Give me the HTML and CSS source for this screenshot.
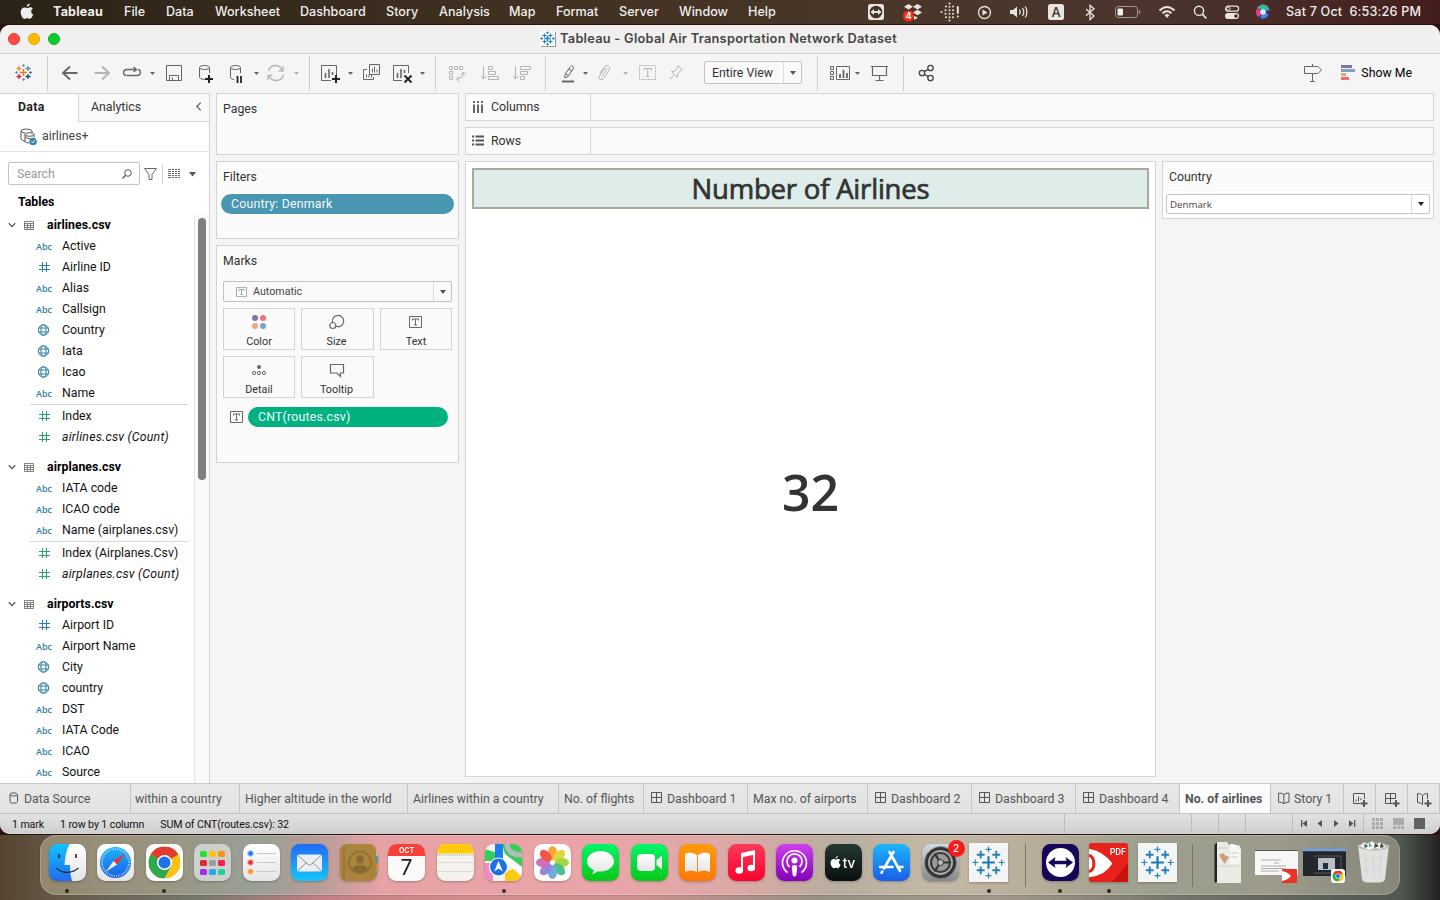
FILE: index.html
```html
<!DOCTYPE html>
<html lang="en">
<head>
<meta charset="utf-8">
<title>Tableau - Global Air Transportation Network Dataset</title>
<link rel="stylesheet" href="styles.css">
</head>
<body>
<svg class="defs" width="0" height="0">
  <defs>
    <symbol id="hash" viewBox="0 0 16 12"><path d="M6.5 1v10M10.5 1v10M3 4.500h11M3 8.500h11" stroke="currentColor" stroke-width="1.100" fill="none"/></symbol>
    <symbol id="globe" viewBox="0 0 16 12"><g stroke="currentColor" fill="none"><circle cx="7.500" cy="6" r="5.200"/><ellipse cx="7.500" cy="6" rx="2.600" ry="5.200"/><path d="M2.600 4h9.800M2.600 8h9.800"/></g></symbol>
    <symbol id="table" viewBox="0 0 10 10"><path d="M.5 1.500h9v8h-9zM.5 3.500h9M.5 5.500h9M.5 7.500h9M3.500 3.500v6M6.500 3.500v6" stroke="#777" fill="none" stroke-width=".9"/></symbol>
    <symbol id="chev" viewBox="0 0 8 6"><path d="M.8 1.200 4 4.600 7.200 1.200" stroke="#555" stroke-width="1.300" fill="none"/></symbol>
    <symbol id="grid" viewBox="0 0 12 12"><path d="M.5.5h10v10h-10zM5.500.5v10M.5 5.500h10" stroke="#555" fill="none"/></symbol>
    <symbol id="book" viewBox="0 0 12 13"><path d="M.6 1.200Q4 .6 5.800 2.600 7.600 .6 11 1.200V10.200Q7.600 9.800 5.800 11.800 4 9.800 .6 10.200ZM5.800 2.600V11.500" stroke="#555" fill="none"/></symbol>
    <symbol id="tbox" viewBox="0 0 13 12"><path d="M.5.5h12v11H.5z" fill="none" stroke="currentColor"/><path d="M3.500 4.500V3h6v1.500M6.500 3v6M5 9h3" fill="none" stroke="currentColor"/></symbol>
    <symbol id="tab-mark" viewBox="0 0 40 40">
      <path d="M20 13.500v13M13.500 20h13" stroke="#1f77b4" stroke-width="2.200"/>
      <path d="M12 8v8M8 12h8M28 8v8M24 12h8M12 24v8M8 28h8M28 24v8M24 28h8" stroke="#2480b4" stroke-width="1.900"/>
      <path d="M20 3.500v6M17 6.500h6M20 30.500v6M17 33.500h6M6.500 17v6M3.500 20h6M33.500 17v6M30.500 20h6" stroke="#2c86b4" stroke-width="1.200"/>
    </symbol>
    <symbol id="chrome" viewBox="0 0 32 32">
      <circle cx="16" cy="16" r="16" fill="#fbc116"/>
      <path d="M16 16 2.140 8A16 16 0 0 1 29.860 8Z" fill="#e33b2e"/><path d="M2.140 8A16 16 0 0 0 16 32L22.900 20 16 16Z" fill="#2da94f"/>
      <path d="M16 8.500H29.900L22.500 20 16 32A16 16 0 0 0 29.900 8.500Z" fill="#fbc116"/>
      <circle cx="16" cy="16" r="7.600" fill="#fff"/><circle cx="16" cy="16" r="6" fill="#1a73e8"/>
    </symbol>
    <linearGradient id="blue" x2="0" y2="1"><stop stop-color="#1e6bf3"/><stop offset="1" stop-color="#19c5fb"/></linearGradient>
    <linearGradient id="finder" x2="0" y2="1"><stop stop-color="#12c3fb"/><stop offset="1" stop-color="#1e6bf3"/></linearGradient>
    <linearGradient id="sky" x2="0" y2="1"><stop stop-color="#1bb6fa"/><stop offset="1" stop-color="#1a5ee8"/></linearGradient>
    <linearGradient id="green" x2="0" y2="1"><stop stop-color="#05f56b"/><stop offset="1" stop-color="#07c816"/></linearGradient>
    <linearGradient id="orange" x2="0" y2="1"><stop stop-color="#ff9b09"/><stop offset="1" stop-color="#fd7902"/></linearGradient>
    <linearGradient id="red" x2="0" y2="1"><stop stop-color="#fb3a5b"/><stop offset="1" stop-color="#f9022c"/></linearGradient>
    <linearGradient id="purple" x2="0" y2="1"><stop stop-color="#cf3ff0"/><stop offset="1" stop-color="#8300b8"/></linearGradient>
    <linearGradient id="white" x2="0" y2="1"><stop stop-color="#fff"/><stop offset="1" stop-color="#e4e4e6"/></linearGradient>
    <linearGradient id="steel" x2="0" y2="1"><stop stop-color="#cfdbe0"/><stop offset="1" stop-color="#86888a"/></linearGradient>
    <linearGradient id="dark" x2="0" y2="1"><stop stop-color="#24372f"/><stop offset="1" stop-color="#0b1013"/></linearGradient>
    <clipPath id="tile"><rect width="37" height="37" rx="8.500"/></clipPath>
  </defs>
</svg>

<header class="menubar">
  <svg class="apple" width="14" height="17" viewBox="0 0 14 17"><path d="M9.700.5C9.800 2 8.500 3.700 6.900 3.700 6.800 2.200 8.200.7 9.700.5ZM12.900 5.600C11.700 6.300 11.200 7.300 11.200 8.500 11.200 10 12 11.100 13.200 11.600 12.700 13.200 11.300 15.900 9.800 15.900 8.800 15.900 8.500 15.300 7.200 15.300 6 15.300 5.600 15.900 4.600 15.900 2.800 15.900.700 12.300.700 9.200.700 6.200 2.500 4.400 4.500 4.400 5.700 4.400 6.400 5.100 7.300 5.100 8.200 5.100 9 4.300 10.400 4.300 11.500 4.300 12.400 4.900 12.900 5.600Z" fill="#eee"/></svg>
  <nav class="menus">
    <b>Tableau</b><span>File</span><span>Data</span><span>Worksheet</span><span>Dashboard</span><span>Story</span><span>Analysis</span><span>Map</span><span>Format</span><span>Server</span><span>Window</span><span>Help</span>
  </nav>
  <svg class="status-icons" width="420" height="25" viewBox="860 0 420 25" fill="none" stroke="#e8e4e0">
    <rect x="868" y="4" width="16" height="16" rx="2.500" fill="#e8e4e0" stroke="none"/><circle cx="876" cy="12" r="6.300" fill="#43352b" stroke="none"/><path d="m870.500 12 3.500-3v2h4V9l3.500 3-3.500 3v-2h-4v2z" fill="#e8e4e0" stroke="none"/>
    <path d="m908.500 4 4.500 2.800-4.500 2.800-4.500-2.800zM917.500 4l4.500 2.800-4.500 2.800-4.500-2.800zM917.500 9.700l4.500 2.800-4.500 2.800-4.500-2.800zM914 15.800l4 2-4 2.200z" fill="#e8e4e0" stroke="none"/><circle cx="908.500" cy="16" r="5.500" fill="#fb2a17" stroke="none"/>
    <path stroke-width="2" stroke-linecap="round" d="M949.500 3.500h.01M946 6.500h.01M949.500 6.800h.01M953 6.500h.01M941.500 12h.01M945.500 10.200h.01M949.500 10.200h.01M953 10.200h.01M945.500 13.700h.01M949.500 13.700h.01M953 13.700h.01M946 17.200h.01M949.500 17.200h.01M953 17.200h.01M949.500 20.500h.01M957.800 7v6M957.800 16.500h.01"/>
    <circle cx="984.500" cy="12.500" r="6" stroke-width="1.300"/><path d="m982.500 9.500 5 3-5 3z" fill="#e8e4e0" stroke="none"/>
    <path d="M1010 10h3l4-3.500v11l-4-3.500h-3z" fill="#e8e4e0" stroke="none"/><path d="M1019.500 9.500q1.500 2.500 0 5M1022.500 8q2.500 4 0 8M1025.300 6.500q3.200 5.500 0 11" stroke-width="1.300"/>
    <rect x="1048" y="4" width="16" height="16" rx="2.500" fill="#e8e4e0" stroke="none"/>
    <path d="m1086 9 8 7-4 3.500V5.500l4 3.300-8 7" stroke-width="1.300"/>
    <rect x="1115.500" y="6.500" width="22" height="11" rx="3" stroke="#a39891"/><rect x="1117.500" y="8.500" width="5.500" height="7" rx="1" fill="#f2eeee" stroke="none"/><path d="M1139.500 10.500v3" stroke="#a39891" stroke-width="1.500"/>
    <path d="M1159.500 10.500q7.500-7 15 0M1162.500 13.200q4.500-4 9 0" stroke-width="2"/><path d="m1167 18-2.500-3q2.500-1.800 5 0z" fill="#e8e4e0" stroke="none"/>
    <circle cx="1199" cy="10.800" r="4.600" stroke-width="1.400"/><path d="m1202.300 14.200 4 4.200" stroke-width="1.700"/>
    <rect x="1225.600" y="6.200" width="13" height="5" rx="2.500" stroke-width="1.200"/><circle cx="1228.300" cy="8.700" r="1.700"/><rect x="1225" y="13" width="14" height="6" rx="3" fill="#e8e4e0" stroke="none"/><circle cx="1236" cy="16" r="1.800" fill="#40302c" stroke="none"/>
    <circle cx="1263" cy="12" r="7" fill="#3b2c6c" stroke="none"/><path d="M1257 8q2-3.500 7-3.500 5 1 5.500 6l-5.500 0z" fill="#3bb6a0" stroke="none"/><path d="M1257 8q-2.500 6 1 9 4-2 5-5z" fill="#e83a87" stroke="none"/><path d="M1260 18q5 2 8-2 1-3-5-4z" fill="#3a87e8" stroke="none"/><circle cx="1263" cy="12" r="2.800" fill="#d9f2fb" stroke="none"/>
    <text x="908.500" y="19" class="tiny">4</text><text x="1056" y="17" class="inp">A</text>
  </svg>
  <span class="clock">Sat 7 Oct&nbsp; 6:53:26 PM</span>
</header>

<main class="window">
  <div class="titlebar">
    <div class="lights"><i class="close"></i><i class="min"></i><i class="max"></i></div>
    <div class="title"><span class="title-icon"><svg width="15" height="15" viewBox="0 0 15 15" fill="none" stroke="#2382b5" stroke-width="1.200"><path d="M7.500 4.500v6M4.500 7.500h6" stroke-width="1.500"/><path d="M4.500 2.500v4M2.500 4.500h4M10.500 2.500v4M8.500 4.500h4M4.500 8.500v4M2.500 10.500h4M10.500 8.500v4M8.500 10.500h4M7.500.5v2.500M6.300 1.500h2.400M7.500 12v2.500M6.300 13.500h2.400M.5 7.500H3M1.500 6.300v2.400M12 7.500h2.500M13.500 6.300v2.400"/></svg></span><b>Tableau - Global Air Transportation Network Dataset</b></div>
  </div>

  <div class="toolbar">
    <svg class="tg" width="47" height="35" viewBox="0 56 47 35" stroke-width="1.300">
      <path d="M23.500 69v7M20 72.500h7" stroke="#e8762d" stroke-width="1.500"/><path d="M19 66v5M16.500 68.500h5" stroke="#eb912c"/><path d="M28 66v5M25.500 68.500h5" stroke="#59879b"/><path d="M19 74v5M16.500 76.500h5" stroke="#c72037"/><path d="M28 74v5M25.500 76.500h5" stroke="#1f457e"/><path d="M23.500 64v3M22 65.500h3M23.500 78v3M22 79.500h3M16.500 71v3M15 72.500h3" stroke="#7099a6" stroke-width="1"/><path d="M30.500 71v3M29 72.500h3" stroke="#5b6591" stroke-width="1"/>
    </svg>
    <svg class="tg" width="261" height="35" viewBox="48 56 261 35" fill="none" stroke="#666">
      <path d="M77.500 73H63.500m6.500-6.500L63 73l7 6.500" stroke-width="1.900"/>
      <path d="M94.500 73h14m-6.500-6.500 7 6.500-7 6.500" stroke="#b4b4b4" stroke-width="1.900"/>
      <path d="M126 75.500q-2.500-.5-2.500-3t3-3H136m-2.500-2.500 3 2.500-3 2.500M138 69.500q2.500.5 2.500 3t-3 3h-11" stroke-width="1.300"/>
      <path d="M150 72h5l-2.500 3z" fill="#666" stroke="none"/>
      <path d="M166.500 65.500h15v15h-15zM169.500 80.500v-5h9v5M172.500 80v-2.500"/>
      <ellipse cx="204.500" cy="67.500" rx="5" ry="2"/><path d="M199.500 67.500v10q1 2 5 2M209.500 67.500V73"/><path d="M209 75v8M205 79h8" stroke="#222" stroke-width="2"/>
      <ellipse cx="235.500" cy="67.500" rx="5" ry="2"/><path d="M230.500 67.500v10q1 2 3.500 2M240.500 67.500V73"/><path d="M237.500 76v7M241 76v7" stroke="#222" stroke-width="1.800"/>
      <path d="M254 72h5l-2.500 3z" fill="#666" stroke="none"/>
      <path d="M268.500 71q1.500-5.500 7-5.500 4.500 0 6.500 4.500M283.500 75q-1.500 5.500-7.500 5.500-5 0-7-4.500M283 66v5h-4.500M268 80v-4.500h4.500" stroke="#b4b4b4" stroke-width="1.300"/>
      <path d="M294 72h5l-2.500 3z" fill="#b4b4b4" stroke="none"/>
    </svg>
    <svg class="tg" width="125" height="35" viewBox="310 56 125 35" fill="none" stroke="#666">
      <path d="M321.500 65.500h15V75M331 80.500h-9.500v-15"/><path d="M325.500 78v-5M329 78v-9M332.500 75v-3" stroke-width="1.600"/><path d="M336 75v8M332 79h8" stroke="#222" stroke-width="2"/>
      <path d="M348 72h5l-2.500 3z" fill="#666" stroke="none"/>
      <path d="M369.500 64.500h10v10h-10zM367 69.500h-3.500v10h10V77M372.500 72.500v-4M374.500 72.500v-6M377 72.500v-3M366.500 77.500v-3M369 77.500v-3M371.500 77.500v-3"/>
      <path d="M393.500 65.500h15V73M402 80.500h-8.500v-15"/><path d="M397.500 78v-5M401 78v-9M404.500 73v-3" stroke-width="1.600"/><path d="m404.500 75.500 7 7m0-7-7 7" stroke="#222" stroke-width="1.900"/>
      <path d="M420 72h5l-2.500 3z" fill="#666" stroke="none"/>
    </svg>
    <svg class="tg" width="109" height="35" viewBox="436 56 109 35" fill="none" stroke="#b4b4b4">
      <path d="M449.500 66.500h3v3h-3zM454.500 66.500h3v3h-3zM459.500 66.500h3v3h-3zM449.500 71.500h3v3h-3zM449.500 76.500h3v3h-3zM463.500 72q0 6.500-6.500 7m2.500-2.500-3 2.500 3 2.500m1.500-6.500 2.500-3 2.500 3"/>
      <path d="M483.500 66v13m-2.500-3 2.500 3 2.500-3M488.500 66.500h4v3h-4zM488.500 71.500h7v3h-7zM488.500 76.500h10v3h-10z"/>
      <path d="M515.500 66v13m-2.500-3 2.500 3 2.500-3M520.500 66.500h10v3h-10zM520.500 71.500h7v3h-7zM520.500 76.500h4v3h-4z"/>
    </svg>
    <svg class="tg last" width="150" height="35" viewBox="546 56 150 35" fill="none" stroke="#666">
      <path d="m564.500 77.500 1-4 5-7q1-1.500 2-.5l.5.500q1 .5.500 1.500l-4.500 7.500-3 2zM568.500 69l3.500 2M565.500 73.500l3 2"/><path d="M562 81.500h12" stroke-width="2"/>
      <path d="M583 72h5l-2.500 3z" fill="#666" stroke="none"/>
      <path d="m600 73 4-5.500q2-3 4.500-1.500t.5 4.500l-5.500 8q-1.500 2-3.500 1t-.5-3.500l4.500-7q1-1.300 2-.4t0 1.900l-4 6" stroke="#b4b4b4"/>
      <path d="M623 72h5l-2.500 3z" fill="#b4b4b4" stroke="none"/>
      <path d="M639.500 65.500h16v14h-16z" stroke="#b4b4b4" stroke-dasharray="2 1"/><path d="M644 70.500v-2h7.500v2M647.700 68.500v8M646 76.500h3.500" stroke="#b4b4b4"/>
      <path d="m678 65.500 4.500 4.500-2 .5-3 3.500v3.500l-6-6 3.500-.5 2.500-3zM674 74.500l-3.500 4.500" stroke="#b4b4b4"/>
    </svg>
    <div class="fit"><span>Entire View</span><i class="caret"></i></div>
    <svg class="tg" width="85" height="35" viewBox="818 56 85 35" fill="none" stroke="#666">
      <path d="M830.500 66.500h3v3h-3zM830.500 71.500h3v3h-3zM830.500 76.500h3v3h-3zM836.500 66.500h13v13h-13z"/><path d="M840 78v-4M843.500 78v-8M847 78v-5" stroke-width="1.800"/>
      <path d="M855 72h5l-2.500 3z" fill="#666" stroke="none"/>
      <path d="M871 66.500h17M872.500 66.500v9h14v-9M879.500 76v4M875.500 80.500h8" stroke-width="1.200"/>
    </svg>
    <svg class="tg last" width="50" height="35" viewBox="904 56 50 35" fill="none" stroke="#444" stroke-width="1.300"><circle cx="922" cy="73" r="2.700"/><circle cx="930.500" cy="68" r="2.700"/><circle cx="930.500" cy="78" r="2.700"/><path d="m924.300 71.600 4-2.200M924.300 74.400l4 2.200"/></svg>
    <div class="showme">
      <svg width="54" height="20" viewBox="1303 63 54 20" fill="none"><path d="M1304.500 66.500h13.500l3.500 3.500-3.500 3.500h-13.500zM1312.500 64v2.500M1312.500 73.500v8M1310 81.500h5" stroke="#666"/><path d="M1341 65h11v3h-11z" fill="#8074a0"/><path d="M1341 69h14v3h-14z" fill="#7f9fcb"/><path d="M1341 73h5v3h-5z" fill="#f2a279"/><path d="M1341 77h8v3h-8z" fill="#f4687c"/></svg>
      <span>Show Me</span>
    </div>
  </div>

  <div class="work">
    <aside class="side">
      <div class="side-tabs"><b>Data</b><span>Analytics</span><svg width="7" height="10" viewBox="0 0 7 10"><path d="M6 .8 1.500 5 6 9.200" stroke="#555" stroke-width="1.200" fill="none"/></svg></div>
      <div class="source">
        <svg width="18" height="18" viewBox="0 0 18 18" fill="none" stroke="#555"><path d="M12 5V3Q11 1 6.500 1T1 3v8q1 2 4 2M1 3q1 2 4 2"/><ellipse cx="9.500" cy="6.500" rx="4.500" ry="1.800"/><path d="M5 6.500v7q1 1.500 4 1.500M14 6.500v3M5 9q2 2 5 1.500"/><circle cx="13" cy="13.500" r="3.800" fill="#3a86a8" stroke="none"/><path d="m11.300 13.500 1.300 1.300 2.200-2.500" stroke="#fff"/></svg>
        <span>airlines+</span>
      </div>
      <div class="search-row">
        <div class="search"><span>Search</span><svg width="10" height="10" viewBox="0 0 10 10" fill="none" stroke="#555"><circle cx="6" cy="4" r="3.300"/><path d="M3.500 6.500.5 9.500" stroke-width="1.300"/></svg></div>
        <svg width="54" height="20" viewBox="143 163 54 20" fill="none" stroke="#666"><path d="M144.500 167.500h12l-4.500 6v5h-3v-5z"/><path d="M162.500 164v18" stroke="#ccc"/><path d="M168 168.500h12M168 170.500h12M168 172.500h12M168 174.500h12M168 176.500h12" stroke-dasharray="3 1 2 1 2 1 2"/><path d="M189 171h7l-3.500 4.500z" fill="#555" stroke="none"/></svg>
      </div>
      <div class="tables-h">Tables</div>
      <div class="tree-wrap">
        <ul class="tree">
          <li class="t"><svg width="8" height="6"><use href="#chev"/></svg><svg width="10" height="10"><use href="#table"/></svg><b>airlines.csv</b></li>
          <li><em>Abc</em>Active</li>
          <li><svg width="16" height="12"><use href="#hash"/></svg>Airline ID</li>
          <li><em>Abc</em>Alias</li>
          <li><em>Abc</em>Callsign</li>
          <li><svg width="16" height="12"><use href="#globe"/></svg>Country</li>
          <li><svg width="16" height="12"><use href="#globe"/></svg>Iata</li>
          <li><svg width="16" height="12"><use href="#globe"/></svg>Icao</li>
          <li><em>Abc</em>Name</li>
          <li class="rule"></li>
          <li class="m"><svg width="16" height="12"><use href="#hash"/></svg>Index</li>
          <li class="m cnt"><svg width="16" height="12"><use href="#hash"/></svg><i>airlines.csv (Count)</i></li>
          <li class="t"><svg width="8" height="6"><use href="#chev"/></svg><svg width="10" height="10"><use href="#table"/></svg><b>airplanes.csv</b></li>
          <li><em>Abc</em>IATA code</li>
          <li><em>Abc</em>ICAO code</li>
          <li><em>Abc</em>Name (airplanes.csv)</li>
          <li class="rule"></li>
          <li class="m"><svg width="16" height="12"><use href="#hash"/></svg>Index (Airplanes.Csv)</li>
          <li class="m cnt"><svg width="16" height="12"><use href="#hash"/></svg><i>airplanes.csv (Count)</i></li>
          <li class="t"><svg width="8" height="6"><use href="#chev"/></svg><svg width="10" height="10"><use href="#table"/></svg><b>airports.csv</b></li>
          <li><svg width="16" height="12"><use href="#hash"/></svg>Airport ID</li>
          <li><em>Abc</em>Airport Name</li>
          <li><svg width="16" height="12"><use href="#globe"/></svg>City</li>
          <li><svg width="16" height="12"><use href="#globe"/></svg>country</li>
          <li><em>Abc</em>DST</li>
          <li><em>Abc</em>IATA Code</li>
          <li><em>Abc</em>ICAO</li>
          <li><em>Abc</em>Source</li>
        </ul>
        <div class="track"><i class="thumb"></i></div>
      </div>
    </aside>

    <section class="cards">
      <div class="card pages"><h3>Pages</h3></div>
      <div class="card filters"><h3>Filters</h3><div class="pill blue">Country: Denmark</div></div>
      <div class="card marks">
        <h3>Marks</h3>
        <div class="select"><svg width="11" height="10"><use href="#tbox"/></svg><span>Automatic</span><i class="caret"></i></div>
        <div class="mark-grid">
          <div><svg width="16" height="16" viewBox="0 0 16 16"><circle cx="4" cy="4" r="3" fill="#8074a0"/><circle cx="12" cy="4" r="3" fill="#fb6a7f"/><circle cx="4" cy="12" r="3" fill="#f4a57c"/><circle cx="12" cy="12" r="3" fill="#7fa1cb"/></svg><span>Color</span></div>
          <div class="shift"><svg width="16" height="16" viewBox="0 0 16 16" fill="none" stroke="#666" stroke-width="1.200"><path d="M3.500 8.200A5.700 5.700 0 1 1 7 12.300"/><circle cx="3.800" cy="11.500" r="3"/></svg><span>Size</span></div>
          <div class="tx"><svg width="13" height="12"><use href="#tbox"/></svg><span>Text</span></div>
          <div><svg width="16" height="16" viewBox="0 0 16 16" fill="none" stroke="#666"><circle cx="8" cy="5" r="2" fill="#666" stroke="none"/><circle cx="3" cy="11" r="1.600"/><circle cx="8" cy="11" r="1.600"/><circle cx="13" cy="11" r="1.600"/></svg><span>Detail</span></div>
          <div class="shift"><svg width="16" height="16" viewBox="0 0 16 16" fill="none" stroke="#666" stroke-width="1.200"><path d="M1.500 2.500h13v8.500h-3v3.500L8 11H1.500z"/></svg><span>Tooltip</span></div>
        </div>
        <div class="encoding"><svg width="13" height="12"><use href="#tbox"/></svg><div class="pill green">CNT(routes.csv)</div></div>
      </div>
    </section>

    <section class="main">
      <div class="shelf"><div class="shelf-label"><svg width="12" height="12" viewBox="0 0 12 12"><path d="M2 0v2M6 0v2M10 0v2M2 3.500V12M6 3.500V12M10 3.500V12" stroke="#555" stroke-width="1.800"/></svg>Columns</div></div>
      <div class="shelf"><div class="shelf-label"><svg width="12" height="12" viewBox="0 0 12 12"><path d="M0 1.500h2M0 5.500h2M0 9.500h2M3.500 1.500H12M3.500 5.500H12M3.500 9.500H12" stroke="#555" stroke-width="1.800"/></svg>Rows</div></div>
      <div class="viz-row">
        <div class="viz">
          <h1>Number of Airlines</h1>
          <div class="value">32</div>
        </div>
        <div class="card country"><h3>Country</h3><div class="filter-body"><div class="combo"><span>Denmark</span><i class="caret"></i></div></div></div>
      </div>
    </section>
  </div>

  <div class="tabs">
    <div class="ds"><svg width="10" height="12" viewBox="0 0 10 12" fill="none" stroke="#555"><path d="M1 2.500Q1 .8 4.500.8T8.500 2.500v7q0 1.700-4 1.700T1 9.500zM1 2.500Q1 4 4.500 4T8.500 2.500"/></svg>Data Source</div>
    <div class="cut">within a country</div><div>Higher altitude in the world</div><div>Airlines within a country</div><div>No. of flights</div>
    <div class="ic"><svg width="12" height="12"><use href="#grid"/></svg>Dashboard 1</div><div>Max no. of airports</div>
    <div class="ic"><svg width="12" height="12"><use href="#grid"/></svg>Dashboard 2</div>
    <div class="ic"><svg width="12" height="12"><use href="#grid"/></svg>Dashboard 3</div>
    <div class="ic"><svg width="12" height="12"><use href="#grid"/></svg>Dashboard 4</div>
    <div class="on">No. of airlines</div>
    <div class="ic"><svg width="12" height="13"><use href="#book"/></svg>Story 1</div>
    <div class="new"><svg width="16" height="16" viewBox="0 0 16 16" fill="none" stroke="#555"><path d="M12.500 7V1.500H1.500v10H8M4 9.500V7.500M6.500 9.500V4.500M9 8V6"/><path d="M12 8v7M8.500 11.500h7" stroke-width="1.900"/></svg></div>
    <div class="new"><svg width="16" height="16" viewBox="0 0 16 16" fill="none" stroke="#555"><path d="M11.500 7V1.500H1.500v10H8M6.500 1.500v10M1.500 6.500h10"/><path d="M12 8v7M8.500 11.500h7" stroke-width="1.900"/></svg></div>
    <div class="new"><svg width="16" height="16" viewBox="0 0 16 16" fill="none" stroke="#555"><path d="M11.500 7V1.500Q8 1.500 6.500 3.500 5 1.500 1.500 1.500v9Q5 10.500 6.500 12.500M6.500 3.500v9"/><path d="M12 8v7M8.500 11.500h7" stroke-width="1.900"/></svg></div>
  </div>
  <div class="statusbar">
    <div class="info"><span>1 mark</span><span>1 row by 1 column</span><span>SUM of CNT(routes.csv): 32</span></div>
    <div></div><div></div><div></div><div></div>
    <div><svg width="70" height="20" viewBox="1293 814 70 20" fill="#555"><path d="M1301 820h1.300v7H1301zM1307 820v7l-4.500-3.500zM1322 820v7l-4.500-3.500zM1334 820v7l4.500-3.500zM1349 820v7l4.500-3.500zM1354 820h1.300v7H1354z"/></svg></div>
    <div><svg width="75" height="20" viewBox="1364 814 75 20" fill="#aaa"><path d="M1372 818h3v3h-3zM1376 818h3v3h-3zM1380 818h3v3h-3zM1372 822h3v3h-3zM1376 822h3v3h-3zM1380 822h3v3h-3zM1372 826h3v3h-3zM1376 826h3v3h-3zM1380 826h3v3h-3zM1393 818h11v7h-11zM1393 826h3v3h-3zM1397 826h3v3h-3zM1401 826h3v3h-3z"/><path d="M1414 818h11v11h-11z" fill="#606060"/></svg></div>
  </div>
</main>

<footer class="dock">
  <div class="slot run"><svg viewBox="0 0 37 37"><g clip-path="url(#tile)"><rect width="37" height="37" fill="url(#finder)"/><path d="M20.500 0Q16 9 15.500 21h5.500q-.5 8 2 16h14V0z" fill="url(#white)"/></g><path d="M10 10v4M27 10v4" stroke="#223" stroke-width="1.600"/><path d="M7 24q11 9 22.500 0" fill="none" stroke="#234" stroke-width="1.300"/></svg></div>
  <div class="slot"><svg viewBox="0 0 37 37"><rect width="37" height="37" rx="8.500" fill="url(#white)"/><circle cx="18.500" cy="18.500" r="15.500" fill="url(#sky)"/><circle cx="18.500" cy="18.500" r="13.500" fill="none" stroke="#d8eefb" stroke-width="2" stroke-dasharray=".6 1.200"/><path d="m28.500 9-8.500 11.500-3.500-3.500z" fill="#f03428"/><path d="m8.500 28 8-11 3.500 3.500z" fill="#f4f4f4"/></svg></div>
  <div class="slot run"><svg viewBox="0 0 37 37"><rect width="37" height="37" rx="8.500" fill="#fbfbfb"/><use href="#chrome" x="2.500" y="2.500" width="32" height="32"/></svg></div>
  <div class="slot"><svg viewBox="0 0 37 37"><rect width="37" height="37" rx="8.500" fill="#cdd0cc"/><g><rect x="6" y="7" width="7" height="6" rx="1.500" fill="#2be12f"/><rect x="15" y="7" width="7" height="6" rx="1.500" fill="#fdc110"/><rect x="24" y="7" width="7" height="6" rx="1.500" fill="#fb9412"/><rect x="6" y="16" width="7" height="6" rx="1.500" fill="#e02730"/><rect x="15" y="16" width="7" height="6" rx="1.500" fill="#999ea0"/><rect x="24" y="16" width="7" height="6" rx="1.500" fill="#f31f57"/><rect x="6" y="25" width="7" height="6" rx="1.500" fill="#a82be4"/><rect x="15" y="25" width="7" height="6" rx="1.500" fill="#2aa5f6"/><rect x="24" y="25" width="7" height="6" rx="1.500" fill="#1fd2a0"/></g></svg></div>
  <div class="slot"><svg viewBox="0 0 37 37"><rect width="37" height="37" rx="8.500" fill="url(#white)"/><path d="M14 9.500h19M14 18.500h19M14 27.500h19" stroke="#c8c8c8"/><g stroke-width="1"><circle cx="7.500" cy="9.500" r="2.800" fill="#1b80f5" stroke="#a9cdf8"/><circle cx="7.500" cy="18.500" r="2.800" fill="#f43029" stroke="#f9b0ac"/><circle cx="7.500" cy="27.500" r="2.800" fill="#f7971d" stroke="#fbd1a0"/></g></svg></div>
  <div class="slot"><svg viewBox="0 0 37 37"><rect width="37" height="37" rx="8.500" fill="url(#blue)"/><rect x="6" y="10.500" width="25" height="17" rx="2" fill="#eceeef"/><path d="m7 11.500 10 9q1.500 1.200 3 0l10-9M7 26.500l8.500-8M30 26.500l-8.500-8" fill="none" stroke="#8f9599"/></svg></div>
  <div class="slot"><svg viewBox="0 0 37 37"><path d="M30 7h7v5h-7z" fill="#bfc3c2"/><path d="M30 12h8v7h-8z" fill="#3b9fb4"/><path d="M30 19h8v7h-8z" fill="#e98225"/><path d="M30 26h7v6h-7z" fill="#4bae48"/><rect width="36" height="37" rx="7" fill="#aa833d"/><path d="M4 2v33" stroke="#8c6a2d"/><circle cx="20" cy="18.500" r="11" fill="none" stroke="#8a6a31" stroke-width="1.200"/><circle cx="20" cy="15.500" r="4" fill="#8a6a31"/><path d="M12.500 25q1.500-4 7.500-4t7.500 4q-3 3.500-7.500 3.500T12.500 25z" fill="#8a6a31"/></svg></div>
  <div class="slot"><svg viewBox="0 0 37 37"><g clip-path="url(#tile)"><rect width="37" height="37" fill="#fafafa"/><rect width="37" height="12" fill="#f6403a"/></g><text x="18.500" y="9" class="cal-m">OCT</text><text x="18.500" y="31" class="cal-d">7</text></svg></div>
  <div class="slot"><svg viewBox="0 0 37 37"><g clip-path="url(#tile)"><rect width="37" height="37" fill="#f4f2ee"/><rect width="37" height="9.500" fill="#fdcb0c"/><path d="M0 11h37" stroke="#999" stroke-dasharray="1 1.200"/><path d="M0 18.500h37M0 27.500h37" stroke="#dcdad6"/></g></svg></div>
  <div class="slot run"><svg viewBox="0 0 37 37"><g clip-path="url(#tile)"><rect width="37" height="37" fill="#f2f2ef"/><path d="M17 0h20v23L20 10z" fill="#39cd55"/><path d="M0 5v12h12V9z" fill="#35cf58"/><path d="m18 9 19 14v8L18 16z" fill="#fff"/><path d="M20 28l8-3 9 8v4H20z" fill="#fbcb10"/><path d="M0 19h8v18H0z" fill="#f188c9"/><path d="M10 0h8v24h-8z" fill="#1b7df2"/><path d="M22 0q1 11 15 11" stroke="#b7babb" stroke-width="5" fill="none"/></g><circle cx="13.500" cy="23" r="9" fill="#1a72e8" stroke="#fff" stroke-width="1.200"/><path d="m13.500 17 4.300 10.500-4.300-3-4.300 3z" fill="#fff"/></svg></div>
  <div class="slot"><svg viewBox="0 0 37 37"><rect width="37" height="37" rx="8.500" fill="#fdfdfd"/><g transform="translate(18.500 18.500)" opacity=".88"><ellipse cy="-9.500" rx="4.600" ry="7" fill="#fb9a1d"/><ellipse cy="-9.500" rx="4.600" ry="7" fill="#d9d420" transform="rotate(45)"/><ellipse cy="-9.500" rx="4.600" ry="7" fill="#9bd12b" transform="rotate(90)"/><ellipse cy="-9.500" rx="4.600" ry="7" fill="#36b97a" transform="rotate(135)"/><ellipse cy="-9.500" rx="4.600" ry="7" fill="#5ba0e0" transform="rotate(180)"/><ellipse cy="-9.500" rx="4.600" ry="7" fill="#8a76cf" transform="rotate(225)"/><ellipse cy="-9.500" rx="4.600" ry="7" fill="#c75bae" transform="rotate(270)"/><ellipse cy="-9.500" rx="4.600" ry="7" fill="#f2402e" transform="rotate(315)"/></g></svg></div>
  <div class="slot"><svg viewBox="0 0 37 37"><rect width="37" height="37" rx="8.500" fill="url(#green)"/><path d="M18.500 7C26 7 32 11.500 32 17.300S26 27.500 18.500 27.500q-1.500 0-3-.2Q13 30 10 30.200q1.700-2 1.700-4.300Q5 23 5 17.300C5 11.500 11 7 18.500 7z" fill="url(#white)"/></svg></div>
  <div class="slot"><svg viewBox="0 0 37 37"><rect width="37" height="37" rx="8.500" fill="url(#green)"/><rect x="6" y="10" width="18" height="17" rx="4" fill="url(#white)"/><path d="m25.500 16 5.500-4.500v14L25.500 21z" fill="#eee"/></svg></div>
  <div class="slot"><svg viewBox="0 0 37 37"><rect width="37" height="37" rx="8.500" fill="url(#orange)"/><path d="M18 11Q12 6.500 6 10v18q6-3 12 0zM19 11q6-4.500 12-1v18q-6-3-12 0z" fill="url(#white)"/></svg></div>
  <div class="slot"><svg viewBox="0 0 37 37"><rect width="37" height="37" rx="8.500" fill="url(#red)"/><path d="M14 10.500v15M26 7.500v15" stroke="#fff" stroke-width="2"/><path d="M13 9 27 6v4.500l-14 3z" fill="#fff"/><ellipse cx="11.300" cy="26.500" rx="3.800" ry="3.300" fill="#fff"/><ellipse cx="23.300" cy="24" rx="3.800" ry="3.300" fill="#fff"/></svg></div>
  <div class="slot"><svg viewBox="0 0 37 37"><rect width="37" height="37" rx="8.500" fill="url(#purple)"/><g fill="none" stroke="#fff" stroke-width="1.700"><path d="M11.500 28.500a12 12 0 1 1 14 0"/><path d="M13.500 23a7.500 7.500 0 1 1 10 0"/></g><circle cx="18.500" cy="16.500" r="3" fill="#fff"/><path d="M15.800 23q0-2 2.700-2t2.700 2l-.9 8q-.3 1.500-1.800 1.500t-1.800-1.500z" fill="#fff"/></svg></div>
  <div class="slot"><svg viewBox="0 0 37 37"><rect width="37" height="37" rx="8.500" fill="url(#dark)"/><path transform="translate(5 11.500) scale(.8)" d="M9.700.5C9.800 2 8.500 3.700 6.900 3.700 6.800 2.200 8.200.7 9.700.5ZM12.900 5.600C11.700 6.300 11.200 7.300 11.200 8.500 11.200 10 12 11.100 13.200 11.600 12.700 13.200 11.300 15.900 9.800 15.900 8.800 15.900 8.500 15.300 7.200 15.300 6 15.300 5.600 15.900 4.600 15.900 2.800 15.900.700 12.300.700 9.200.700 6.200 2.500 4.400 4.500 4.400 5.700 4.400 6.400 5.100 7.300 5.100 8.200 5.100 9 4.300 10.400 4.300 11.500 4.300 12.400 4.900 12.900 5.600Z" fill="#fff"/><text x="24" y="23.500" class="tv">tv</text></svg></div>
  <div class="slot"><svg viewBox="0 0 37 37"><rect width="37" height="37" rx="8.500" fill="url(#sky)"/><path d="m16.500 8 10.500 19M20.500 8 11 24.500M9.300 27.500l-.8 1.200M7 23h12.500M24.500 23h5" stroke="#fff" stroke-width="2.600" stroke-linecap="round"/></svg></div>
  <div class="slot badge"><svg viewBox="0 0 37 37"><rect width="37" height="37" rx="8.500" fill="url(#steel)"/><circle cx="18.500" cy="18.500" r="14" fill="#aaa" stroke="#333" stroke-width="3"/><circle cx="18.500" cy="18.500" r="15.800" fill="none" stroke="#444" stroke-dasharray="1 1"/><circle cx="18.500" cy="18.500" r="9.500" fill="#999" stroke="#3c3c3c" stroke-width="2.200"/><path d="M18.500 18.500 29 18.500M18.500 18.500l-6-9M18.500 18.500l-6 9" stroke="#333" stroke-width="2.200"/><circle cx="18.500" cy="18.500" r="3" fill="#bbb" stroke="#333"/></svg><i>2</i></div>
  <div class="slot run sq"><svg viewBox="0 0 40 40"><rect width="40" height="40" fill="#f3f5f5"/><use href="#tab-mark" width="40" height="40"/></svg></div>
  <i class="sep"></i>
  <div class="slot run"><svg viewBox="0 0 37 37"><rect width="37" height="37" rx="8.500" fill="#140758"/><circle cx="18.500" cy="18.500" r="14.500" fill="#fff"/><path d="m6 18.500 7.500-5.500-1 3.800h12l-1-3.800 7.500 5.500-7.500 5.500 1-3.800h-12l1 3.800z" fill="#140758"/></svg></div>
  <div class="slot run sq"><svg viewBox="0 0 40 40"><rect width="40" height="40" rx="3" fill="#e8211b"/><path d="M24 40 40 20v20z" fill="#c9110e"/><path d="M0 6q14 2 24 15Q16 34 0 35z" fill="#fff"/><path d="M0 12.500q5 2 5 8.500T0 29.500" stroke="#e8211b" stroke-width="3" fill="none"/><text x="29.500" y="12" class="pdf">PDF</text></svg></div>
  <div class="slot sq"><svg viewBox="0 0 40 40"><rect width="40" height="40" fill="#f3f5f5"/><use href="#tab-mark" width="40" height="40"/></svg></div>
  <i class="sep second"></i>
  <svg class="recent" width="180" height="50" viewBox="1208 838 180 50">
    <path d="M1216 842h11l2 3h10l2 4v34h-25z" fill="#eceae6"/><path d="M1214.500 845v37.500h2.500V842z" fill="#222"/><path d="M1230 844h4l6 6v14h-10z" fill="#f7f7f5"/><path d="m1219 855 4-2 3 3 4 1-3 3-2 4-3-4z" fill="#c9a17c"/><path d="M1218 848h10M1218 866h21M1231 853h7M1231 857h7" stroke="#cfccc7"/>
    <rect x="1255" y="851" width="43" height="24" fill="#f7f7f6"/><path d="M1255 850.500h43" stroke="#555"/><path d="M1261 860h20M1274 863h5M1261 866h25M1261 868.500h25M1261 871h18" stroke="#999" stroke-width=".8"/><rect x="1282" y="869" width="15" height="14" rx="1" fill="#ed3028"/><path d="M1282 871q6 1 9 5-3 4-9 5z" fill="#fff"/>
    <rect x="1303" y="849" width="43" height="27" fill="#23272c"/><path d="M1303 850h43" stroke="#739de3" stroke-width="2.500"/><path d="M1314 856h27v17h-27" fill="none" stroke="#545a60"/><rect x="1318" y="858" width="17" height="12" fill="#b9bfc5"/><path d="M1323 863h5v6h-5z" fill="#222e3d"/><rect x="1331" y="869" width="14" height="14" rx="3" fill="#fff"/><use href="#chrome" x="1332.500" y="870.500" width="11" height="11"/>
    <path d="M1358 845h31l-4 34q-.5 3-5 3.500h-13q-4.500-.5-5-3.500z" fill="#e6e7e6" opacity=".95"/><ellipse cx="1373.500" cy="846.500" rx="15" ry="4" fill="#b9bbb9"/><path d="m1360 846 4-4 3 3 5-4 4 4 5-3 5 5-6 2-5-1-6 2z" fill="#f4f4f4"/><path d="m1364 844 4 2-3 2zM1375 843l4 3-5 2zM1381 842l3 5-4 1z" fill="#444"/><path d="m1369 843 3 3-3 1z" fill="#3a9a93"/><path d="m1365 853 2 24M1373 855l1 22M1382 853l-3 24M1362 862l20-6M1364 872l18-8" stroke="#d3d4d3" fill="none"/>
  </svg>
</footer>
</body>
</html>
```

FILE: styles.css
```css
* { box-sizing: border-box; margin: 0; padding: 0; }
html, body { width: 1440px; height: 900px; overflow: hidden; }
body {
  display: flex; flex-direction: column; align-items: flex-start;
  font: 12.3px/16px Roboto, "Liberation Sans", sans-serif; color: #333;
  background: linear-gradient(90deg, #55432f 0, #66594a 60px, #77796d 200px, #c37f83 320px, #d38d90 500px, #c9908e 640px, #969083 820px, #a2988a 1000px, #717268 1200px, #505850 1400px, #222 1440px);
}
svg { display: block; flex: none; }
.defs { position: absolute; }
i { font-style: normal; }

.menubar {
  width: 1440px; height: 25px; flex: none; display: flex; align-items: center;
  font: 500 12.6px/24px Inter, sans-serif; color: #f0eeec;
  background: linear-gradient(90deg, #2b2317, #3f3021 480px, #4a372a 900px, #4b352e 1150px, #431e1c);
}
.apple { margin: 0 19px 2px 20px; }
.menus { width: 807px; height: 25px; display: grid; grid-template-columns: 71px 42px 49px 85px 86px 53px 70px 47px 63px 60px 69px 60px; white-space: nowrap; }
.menus b { font-weight: 700; letter-spacing: .15px; }
.status-icons { overflow: visible; }
.tiny { font: 700 9px Inter, sans-serif; fill: #fff; stroke: none; text-anchor: middle; }
.inp { font: 500 13px Inter, sans-serif; fill: #3a2f2a; stroke: none; text-anchor: middle; }
.clock { margin-left: 6px; white-space: nowrap; height: 25px; letter-spacing: .18px; }

.window { width: 1440px; height: 809px; flex: none; border-radius: 10px; overflow: hidden; background: #f5f5f5; display: flex; flex-direction: column; box-shadow: 0 0 0 10px #2a1310; clip-path: inset(-1px 0 -1px 0); }
.titlebar { height: 29px; flex: none; display: flex; align-items: center; background: #f1f0ee; border-bottom: 1px solid #cfcfcf; }
.lights { display: flex; gap: 8px; padding-left: 8px; width: 532px; }
.lights i { width: 12px; height: 12px; border-radius: 50%; }
.close { background: #fe4a45; border: 1px solid #e2362f; }
.min { background: #fdb905; border: 1px solid #e2a40a; }
.max { background: #0bcb2c; border: 1px solid #0eb128; }
.title { display: flex; align-items: center; gap: 4px; padding: 0 0 2px 9px; font: 600 12.8px/26px Inter, sans-serif; color: #454545; white-space: nowrap; letter-spacing: .26px; }
.title b { font-weight: 600; padding-top: 2px; }
.title-icon { width: 15px; height: 15px; background: #fff; box-shadow: 1px 1px 0 #999; margin-left: -1px; margin-right: 1px; }

.toolbar { height: 39px; flex: none; display: flex; align-items: center; }
.tg { border-right: 1px solid #cfcfcf; box-sizing: content-box; }
.tg.last { border-right: 0; }
.fit { width: 98px; height: 23px; margin: 0 15px 2px 8px; border: 1px solid #c4c4c4; border-radius: 2px; display: flex; background: #fafafa; line-height: 22px; padding-left: 7px; }
.fit span { flex: 1; }
.caret { width: 18px; height: 100%; border-left: 1px solid #ddd; display: flex; align-items: center; justify-content: center; }
.caret::before { content: ""; border: 3.500px solid transparent; border-top: 4.500px solid #555; border-bottom: 0; }
.fit + .tg { border-left: 1px solid #cfcfcf; }
.showme { display: flex; align-items: center; gap: 4px; margin-left: auto; padding: 0 28px 2px 0; color: #000; }
.showme svg { margin-top: 1px; }

.work { height: 690px; flex: none; display: grid; grid-template-columns: 210px 243px 969px; column-gap: 6px; }
.side { border: 1px solid #d4d4d4; border-left: 0; border-bottom: 0; background: #fff; display: flex; flex-direction: column; overflow: hidden; }
.side-tabs { height: 28px; flex: none; display: flex; line-height: 27px; }
.side-tabs b { width: 78px; padding-left: 18px; color: #222; letter-spacing: .3px; }
.side-tabs span { width: 117px; padding-left: 12px; background: #fafafa; border-left: 1px solid #d4d4d4; border-bottom: 1px solid #d4d4d4; }
.side-tabs svg { width: 14px; height: 28px; padding: 8px 7px 10px 0; background: #fafafa; border-bottom: 1px solid #d4d4d4; }
.source { height: 30px; flex: none; display: flex; align-items: center; gap: 4px; padding-left: 20px; border-bottom: 1px solid #e2e2e2; color: #444; }
.source span { padding-bottom: 1px; }
.search-row { display: flex; align-items: center; gap: 3px; padding: 10px 0 0 8px; height: 33px; flex: none; }
.search { width: 132px; height: 23px; border: 1px solid #c4c4c4; border-radius: 2px; display: flex; align-items: center; justify-content: space-between; padding: 0 7px 0 8px; color: #999; }
.tables-h { height: 30px; flex: none; padding: 9px 0 0 18px; font-weight: 700; color: #000; }
.tree-wrap { flex: 1; min-height: 0; display: flex; justify-content: space-between; overflow: hidden; }
.tree { list-style: none; width: 188px; color: #111; }
.tree li { height: 21px; line-height: 21px; display: flex; align-items: center; padding-left: 36px; gap: 10px; white-space: nowrap; }
.tree li svg { color: #2f7ea3; margin-bottom: 1px; }
.tree li.m svg { color: #2f9d78; }
.tree li.t { padding-left: 8px; gap: 8px; color: #000; }
.tree li.t b { padding-left: 5px; letter-spacing: .05px; }
.tree li em { width: 16px; font: 600 9px/19px "Open Sans", sans-serif; color: #33809f; letter-spacing: 0; }
.tree li i { font-style: italic; letter-spacing: .22px; }
.tree li.rule { height: 1px; background: #d9d9d9; margin: 0 0 1px 30px; padding: 0; }
.tree li.cnt { margin-bottom: 9px; }
.track { width: 15px; border-left: 1px solid #e6e6e6; background: #fafafa; padding: 3px 0 0 3px; }
.thumb { display: block; width: 8px; height: 262px; border-radius: 4px; background: #7f7f7f; }

.cards { display: flex; flex-direction: column; gap: 6px; }
.card { border: 1px solid #d4d4d4; background: #fafafa; }
.card h3 { font-size: inherit; font-weight: 400; line-height: 30px; padding-left: 6px; }
.pages { height: 62px; }
.filters { height: 78px; padding-left: 4px; }
.filters h3 { padding-left: 2px; height: 32px; }
.pill { height: 20px; border-radius: 10px; line-height: 21px; padding-left: 10px; color: #f4fafc; letter-spacing: .22px; }
.blue { width: 233px; background: #4996b2; }
.green { width: 200px; background: #00b180; }
.marks { height: 218px; padding-left: 6px; }
.marks h3 { padding: 0; height: 35px; }
.select { width: 229px; height: 21px; border: 1px solid #c4c4c4; border-radius: 2px; display: flex; align-items: center; font-size: 10.700px; color: #444; }
.select svg { color: #999; margin: 0 6px 0 12px; }
.select span { flex: 1; }
.mark-grid { display: grid; grid-template-columns: 72px 73px 72px; gap: 6px; height: 90px; margin-top: 6px; font-size: 10.800px; }
.mark-grid div { height: 42px; border: 1px solid #d4d4d4; display: flex; flex-direction: column; align-items: center; line-height: 14px; padding-top: 5px; gap: 5px; }
.mark-grid .shift { padding-right: 2px; }
.mark-grid .tx { padding-top: 7px; gap: 7px; }
.tx svg, .encoding svg { color: #666; }
.tx svg { margin-right: 1px; }
.encoding { display: flex; align-items: center; gap: 5px; padding: 9px 0 0 7px; }

.main { display: flex; flex-direction: column; gap: 6px; }
.shelf { height: 28px; border: 1px solid #d4d4d4; background: #fafafa; }
.shelf-label { width: 125px; height: 26px; border-right: 1px solid #d4d4d4; display: flex; align-items: center; gap: 7px; padding-left: 6px; }
.viz-row { display: grid; grid-template-columns: 691px 272px; gap: 6px; height: 616px; align-items: start; }
.viz { height: 616px; border: 1px solid #d4d4d4; background: #fff; padding: 6px; display: flex; flex-direction: column; }
.viz h1 { height: 41px; flex: none; border: 2px solid #aaa898; background: #dfedea; font: 400 27.500px/38px "Open Sans", sans-serif; color: #333; text-align: center; -webkit-text-stroke: .7px #333; letter-spacing: -.2px; }
.value { flex: 1; display: flex; align-items: center; justify-content: center; font: 600 50px/60px "Open Sans", sans-serif; color: #333; padding-top: 5px; }
.country { height: 58px; }
.filter-body { background: #fff; height: 27px; padding: 3px; }
.country h3 { line-height: 31px; height: 29px; }
.combo { height: 20px; border: 1px solid #c4c4c4; border-radius: 2px; display: flex; font: 9.700px/19px "Open Sans", sans-serif; padding-left: 3px; color: #444; }
.combo span { flex: 1; }
.combo .caret::before { border-top-color: #222; }

.tabs { height: 30px; flex: none; border-top: 1px solid #c9c9c9; background: linear-gradient(#e8e8e8, #e2e2e2); display: grid; grid-template-columns: 131px 109px 168px 151px 85px 104px 120px 104px 104px 104px 91px 73px 32px 32px 32px; color: #555; line-height: 29px; }
.tabs > div { border-right: 1px solid #c4c4c4; padding: 1px 0 0 5px; white-space: nowrap; display: flex; align-items: center; height: 29px; }
.tabs > .cut { padding-left: 4px; }
.tabs > .ds { padding-left: 9px; gap: 5px; }
.tabs > .ic { padding-left: 7px; gap: 4px; }
.tabs svg { margin-bottom: 2px; }
.tabs > .on { background: #fbfbfb; font-weight: 700; }
.tabs > .new { padding: 4px 0 0 8px; }
.statusbar { height: 21px; flex: none; border-top: 1px solid #c4c4c4; background: linear-gradient(#e2e2e2, #cfcfcf); display: grid; grid-template-columns: 1065px 127px 27px 27px 47px 71px 76px; font-size: 10.600px; line-height: 22px; color: #111; }
.statusbar > div { border-right: 1px solid #bdbdbd; height: 20px; }
.statusbar > div:last-child { border: 0; }
.info { display: flex; gap: 16px; padding-left: 12px; letter-spacing: -.1px; }

.dock {
  width: 1360px; height: 60px; margin: 1px 0 0 40px; flex: none; border-radius: 16px; padding-left: 3px;
  display: flex; align-items: flex-start; box-shadow: inset 0 0 0 1px rgba(255,255,255,.2), 0 0 0 .5px rgba(60,50,45,.3);
  background: linear-gradient(90deg, #93876f 0, #99937e 100px, #9aa096 220px, #b79d97 280px, #e6a2a4 340px, #eaa5a9 560px, #dba9a6 700px, #b7aea0 800px, #c4b9a6 900px, #b7ab99 1000px, #9fa08f 1100px, #9b9a8b 1240px, #858679 1360px);
}
.slot { width: 48.500px; height: 60px; display: flex; flex-direction: column; align-items: center; padding-top: 9px; position: relative; flex: none; }
.slot svg { width: 37px; height: 37px; overflow: visible; filter: drop-shadow(0 1px 1px rgba(0,0,0,.25)); }
.slot.sq { padding-top: 8px; }
.slot.sq svg { width: 39px; height: 39px; }
.run::after { content: ""; width: 4px; height: 4px; border-radius: 50%; background: rgba(20,10,5,.8); margin-top: 8px; }
.sq.run::after { margin-top: 7px; }
.badge i { position: absolute; right: 0; top: 5px; width: 17px; height: 17px; border-radius: 50%; background: #fb1a1a; color: #fff; font: 500 10px/17px Inter, sans-serif; text-align: center; }
.sep { width: 1px; height: 43px; margin: 9px 10.500px 0 11.500px; background: #77746a; }
.sep.second { margin: 9px 9.500px 0 10.500px; }
.recent { margin: 3px 0 0 5.500px; overflow: visible; }
.cal-m { font: 700 7px Inter, sans-serif; fill: #fff; text-anchor: middle; }
.cal-d { font: 400 21px Inter, sans-serif; fill: #222; text-anchor: middle; }
.tv { font: 500 13.500px Inter, sans-serif; fill: #fff; text-anchor: middle; }
.pdf { font: 500 9px Roboto, sans-serif; fill: #fff; text-anchor: middle; }
```
